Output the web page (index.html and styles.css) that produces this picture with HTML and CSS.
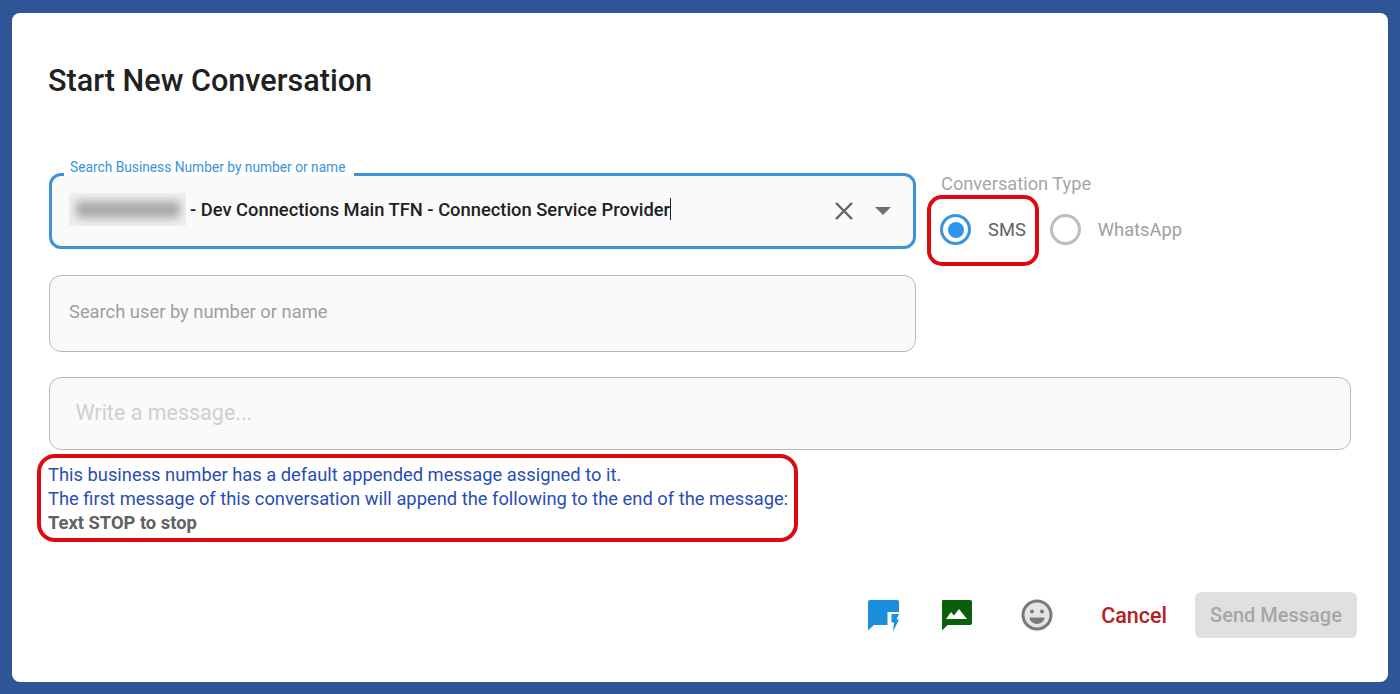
FILE: index.html
```html
<!DOCTYPE html>
<html lang="en">
<head>
<meta charset="utf-8">
<title>Start New Conversation</title>
<link rel="stylesheet" href="styles.css">
</head>
<body>
<main class="dialog">
  <h1 class="title">Start New Conversation</h1>
  <div class="top-row">
    <div class="fields">
      <div class="field field-focus">
        <span class="float-label">Search Business Number by number or name</span>
        <div class="redacted-wrap"><span class="redacted"></span></div>
        <span class="value">- Dev Connections Main TFN - Connection Service Provider</span><span class="caret"></span>
        <svg class="icon-clear" width="24" height="24" viewBox="0 0 24 24"><path d="M4 4L20 20M20 4L4 20" stroke="#666" stroke-width="2.4" fill="none"/></svg>
        <span class="arrow"></span>
      </div>
      <div class="field field-idle">
        <span class="placeholder">Search user by number or name</span>
      </div>
    </div>
    <div class="type">
      <div class="type-label">Conversation Type</div>
      <div class="radios">
        <div class="radio-item">
          <span class="radio radio-on"><span class="dot"></span></span>
          <span class="radio-text radio-text-on">SMS</span>
        </div>
        <div class="radio-item radio-item-off">
          <span class="radio radio-off"></span>
          <span class="radio-text">WhatsApp</span>
        </div>
      </div>
      <div class="mark mark-sms"></div>
    </div>
  </div>
  <div class="message"><span class="message-ph">Write a message...</span></div>
  <div class="notice">
    <div class="mark mark-notice"></div>
    <p class="notice-line">This business number has a default appended message assigned to it.</p>
    <p class="notice-line">The first message of this conversation will append the following to the end of the message:</p>
    <p class="notice-bold">Text STOP to stop</p>
  </div>
  <div class="actions">
    <svg class="act act-quick" width="32" height="32" viewBox="0 0 32 32">
      <path d="M3 1h26.500A2 2 0 0 1 32 3V13H20.500V26H7L1 31.500V3A2 2 0 0 1 3 1z" fill="#1b8fdc"/>
      <path d="M24.500 15h7.500l-2.500 5.500H32L26 32.500l1-9h-2.500z" fill="#1b8fdc"/>
    </svg>
    <svg class="act act-image" width="32" height="32" viewBox="0 0 32 32">
      <path d="M3 1h27a2 2 0 0 1 2 2V24a2 2 0 0 1-2 2H7.500L2 31.500V2a1 1 0 0 1 1-1z" fill="#0b5e0b"/>
      <path d="M6 20l5-7 3 3.500 5-6.500 8 10z" fill="#fff"/>
    </svg>
    <svg class="act act-emoji" width="32" height="32" viewBox="0 0 32 32">
      <circle cx="16" cy="16" r="14" fill="#e4e4e4" stroke="#7a7a7a" stroke-width="3"/>
      <circle cx="11" cy="12.500" r="2" fill="#7a7a7a"/>
      <circle cx="21" cy="12.500" r="2" fill="#7a7a7a"/>
      <path d="M8.500 18.500h15a7.500 6.500 0 0 1-15 0z" fill="#7a7a7a"/>
    </svg>
    <span class="cancel">Cancel</span>
    <span class="send">Send Message</span>
  </div>
</main>
</body>
</html>
```
FILE: styles.css
```css
* { box-sizing: border-box; }
html, body { height: 100%; }
body {
  margin: 0;
  background: #2f5597;
  font-family: Roboto, "Liberation Sans", sans-serif;
  overflow: hidden;
  padding: 13px 12px 12px;
}
.dialog {
  position: relative;
  height: 669px;
  background: #fff;
  border-radius: 8px;
  padding: 50px 37px 0 36px;
}
.title {
  margin: 0;
  font-size: 30.600px;
  line-height: 36px;
  font-weight: 500;
  color: #212121;
}
.top-row {
  display: flex;
  margin-top: 74px;
  margin-left: 1px;
}
.fields {
  width: 867px;
  display: flex;
  flex-direction: column;
  gap: 26px;
}
.field {
  position: relative;
  height: 76px;
  border-radius: 12px;
  background: #fafafa;
  display: flex;
  align-items: center;
}
.field-focus { border: 3px solid #3b93dc; padding: 0 0 4px 17px; }
.field-idle { border: 1.5px solid #b8b8b8; padding: 0 0 4px 19px; height: 77px; }
.float-label {
  position: absolute;
  left: 12px;
  top: -18px;
  padding: 0 9px 0 6px;
  background: #fff;
  font-size: 13.750px;
  line-height: 18px;
  color: #3b93dc;
  white-space: nowrap;
}
.redacted-wrap {
  width: 117px;
  height: 33px;
  background: #f0f0f0;
  margin-right: 4px;
  overflow: hidden;
  display: flex;
  align-items: center;
  justify-content: center;
  flex: none;
}
.redacted {
  display: block;
  width: 104px;
  height: 17px;
  background: #a8a8a8;
  filter: blur(5px);
}
.value {
  font-size: 18.330px;
  font-weight: 500;
  color: #212121;
  white-space: nowrap;
}
.caret {
  width: 1px;
  height: 22px;
  background: #212121;
  flex: none;
}
.icon-clear { position: absolute; right: 57px; top: 23px; }
.arrow {
  position: absolute;
  right: 22px;
  top: 31px;
  width: 0;
  height: 0;
  border-left: 8px solid transparent;
  border-right: 8px solid transparent;
  border-top: 8px solid #707070;
}
.placeholder { font-size: 18.330px; color: #9e9e9e; }
.type { position: relative; margin-left: 25px; }
.type-label { font-size: 18.250px; line-height: 22px; color: #a6a6a6; }
.radios { display: flex; align-items: center; margin: 19px 0 0 -1px; }
.radio-item { display: flex; align-items: center; }
.radio-item-off { margin-left: 24px; }
.radio {
  width: 31px;
  height: 31px;
  border-radius: 50%;
  display: flex;
  align-items: center;
  justify-content: center;
  flex: none;
}
.radio-on { border: 3px solid #3b93dc; }
.radio-off { border: 3px solid #bdbdbd; }
.dot { width: 16px; height: 16px; border-radius: 50%; background: #2f93ee; }
.radio-text { margin-left: 17px; font-size: 18.330px; color: #a0a0a0; }
.radio-text-on { color: #616161; }
.mark { position: absolute; border: 4px solid #dd0a12; pointer-events: none; }
.mark-sms { left: -14px; top: 22px; width: 112px; height: 71px; border-radius: 15px; }
.message {
  margin: 25px 0 0 1px;
  height: 73px;
  width: 1302px;
  border: 1.5px solid #b8b8b8;
  border-radius: 12px;
  background: #fafafa;
  display: flex;
  align-items: center;
  padding: 0 0 3px 25.500px;
}
.message-ph { font-size: 21.500px; color: #cfcfcf; }
.notice { position: relative; margin-top: 13px; }
.notice-line, .notice-bold { margin: 0; font-size: 18.330px; line-height: 24px; white-space: nowrap; }
.notice-line { color: #2a4db5; }
.notice-bold { color: #616161; font-weight: 700; }
.mark-notice { left: -11px; top: -9px; width: 761px; height: 88px; border-radius: 18px; }
.actions {
  display: flex;
  align-items: center;
  margin-top: 57px;
  margin-right: -6px;
  justify-content: flex-end;
}
.act { flex: none; }
.act-image { margin-left: 41px; }
.act-emoji { margin-left: 49px; }
.cancel { margin-left: 48px; font-size: 21.500px; font-weight: 500; color: #b22222; }
.send {
  margin-left: 28px;
  width: 162px;
  height: 46px;
  display: flex;
  align-items: center;
  justify-content: center;
  background: #e0e0e0;
  border-radius: 6px;
  font-size: 20px;
  font-weight: 500;
  color: #a6a6a6;
}
```
